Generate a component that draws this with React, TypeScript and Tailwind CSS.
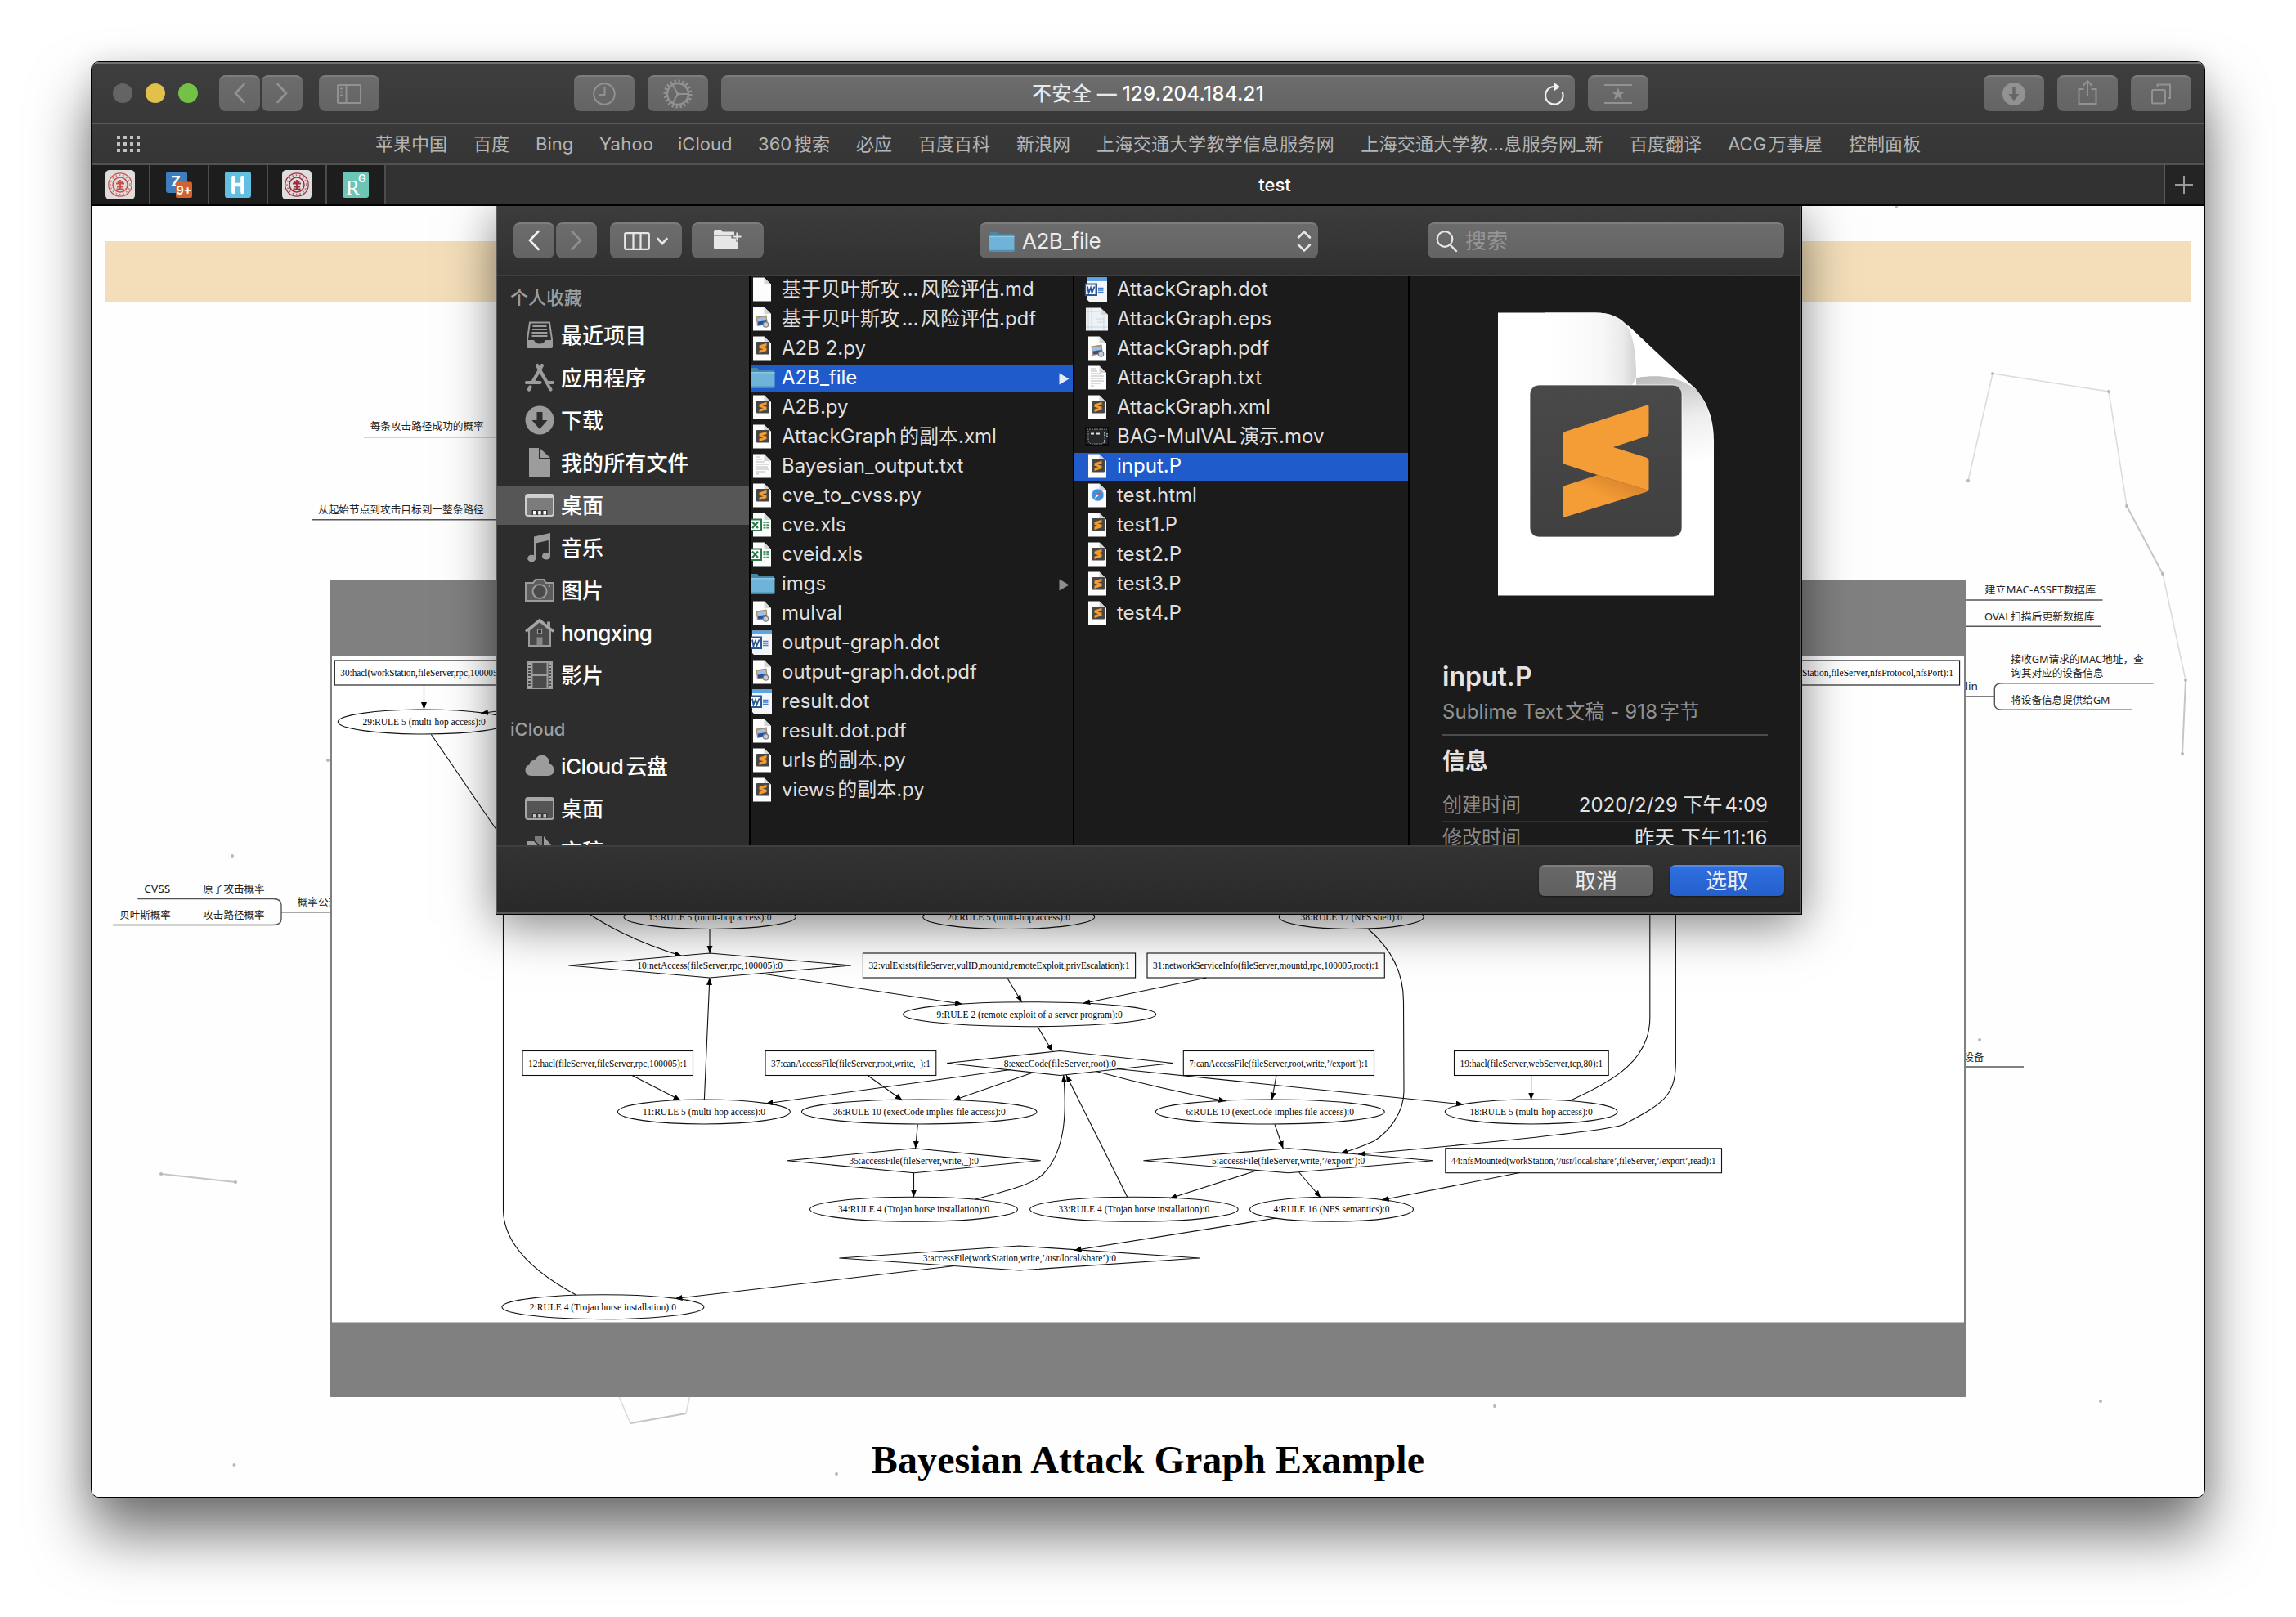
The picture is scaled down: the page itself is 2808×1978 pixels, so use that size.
import React from "react";

/* ---------- graph data ---------- */

type Node = { kind: "rect" | "ellipse" | "diamond"; x1: number; x2: number; cy: number; label: string };

const nodes: Node[] = [
  { kind: "rect", x1: 409.3, x2: 628, cy: 823, label: "30:hacl(workStation,fileServer,rpc,100005):1" },
  { kind: "ellipse", x1: 413.3, x2: 624, cy: 883, label: "29:RULE 5 (multi-hop access):0" },
  { kind: "ellipse", x1: 763, x2: 973.4, cy: 1121.5, label: "13:RULE 5 (multi-hop access):0" },
  { kind: "ellipse", x1: 1128.7, x2: 1338.7, cy: 1121.5, label: "20:RULE 5 (multi-hop access):0" },
  { kind: "ellipse", x1: 1564.2, x2: 1741.2, cy: 1121.5, label: "38:RULE 17 (NFS shell):0" },
  { kind: "diamond", x1: 695.4, x2: 1040.9, cy: 1181, label: "10:netAccess(fileServer,rpc,100005):0" },
  { kind: "rect", x1: 1055.4, x2: 1388.6, cy: 1181, label: "32:vulExists(fileServer,vulID,mountd,remoteExploit,privEscalation):1" },
  { kind: "rect", x1: 1403, x2: 1693.3, cy: 1181, label: "31:networkServiceInfo(fileServer,mountd,rpc,100005,root):1" },
  { kind: "ellipse", x1: 1104.6, x2: 1413.7, cy: 1240.7, label: "9:RULE 2 (remote exploit of a server program):0" },
  { kind: "rect", x1: 639, x2: 847.5, cy: 1300.5, label: "12:hacl(fileServer,fileServer,rpc,100005):1" },
  { kind: "rect", x1: 936, x2: 1144.8, cy: 1300.5, label: "37:canAccessFile(fileServer,root,write,_):1" },
  { kind: "diamond", x1: 1158.2, x2: 1434.6, cy: 1300.5, label: "8:execCode(fileServer,root):0" },
  { kind: "rect", x1: 1447.3, x2: 1680.5, cy: 1300.5, label: "7:canAccessFile(fileServer,root,write,’/export’):1" },
  { kind: "rect", x1: 1778.5, x2: 1967.2, cy: 1300.5, label: "19:hacl(fileServer,webServer,tcp,80):1" },
  { kind: "ellipse", x1: 755.4, x2: 966.4, cy: 1360, label: "11:RULE 5 (multi-hop access):0" },
  { kind: "ellipse", x1: 980.4, x2: 1268, cy: 1360, label: "36:RULE 10 (execCode implies file access):0" },
  { kind: "ellipse", x1: 1413.2, x2: 1693.3, cy: 1360, label: "6:RULE 10 (execCode implies file access):0" },
  { kind: "ellipse", x1: 1767.2, x2: 1978, cy: 1360, label: "18:RULE 5 (multi-hop access):0" },
  { kind: "diamond", x1: 962.7, x2: 1272.8, cy: 1419.7, label: "35:accessFile(fileServer,write,_):0" },
  { kind: "diamond", x1: 1398.4, x2: 1753, cy: 1419.7, label: "5:accessFile(fileServer,write,’/export’):0" },
  { kind: "rect", x1: 1767.8, x2: 2105.5, cy: 1419.7, label: "44:nfsMounted(workStation,’/usr/local/share’,fileServer,’/export’,read):1" },
  { kind: "ellipse", x1: 990.5, x2: 1244.5, cy: 1479.3, label: "34:RULE 4 (Trojan horse installation):0" },
  { kind: "ellipse", x1: 1259.5, x2: 1514.2, cy: 1479.3, label: "33:RULE 4 (Trojan horse installation):0" },
  { kind: "ellipse", x1: 1528.5, x2: 1728.5, cy: 1479.3, label: "4:RULE 16 (NFS semantics):0" },
  { kind: "diamond", x1: 1026.4, x2: 1467.2, cy: 1539, label: "3:accessFile(workStation,write,’/usr/local/share’):0" },
  { kind: "ellipse", x1: 613.9, x2: 860.9, cy: 1598.7, label: "2:RULE 4 (Trojan horse installation):0" },
];

const arrows: string[] = [
  "M518.5 838V868",
  "M640 866L588 872.5",
  "M719 1117C750 1138 790 1156 834 1169.5",
  "M868 1136.5V1166",
  "M930.5 1190.7L1177 1228.3",
  "M1231.6 1196L1249.8 1226",
  "M1475.4 1196L1324.3 1227.5",
  "M861.4 1345L867.9 1196",
  "M1269 1256L1287.3 1286.5",
  "M773 1315.5L832.5 1346",
  "M1235.9 1308.5L936.4 1350",
  "M1061.8 1316L1103.6 1346",
  "M1263.2 1312L1165.7 1346",
  "M1340.4 1310.5C1390 1324 1440 1336 1499.3 1347",
  "M1366 1307.5L1789.7 1351",
  "M1561 1315.5L1555.5 1345.5",
  "M1872.6 1315.5V1345.5",
  "M1122.3 1375.5L1119.6 1405",
  "M1117.5 1434.5V1464.5",
  "M1193 1467C1225 1458 1262 1450 1276 1436C1305 1406 1304 1355 1300.7 1315",
  "M1378.9 1464.5L1303.9 1315",
  "M1673.4 1136.5C1701 1160 1716.5 1190 1716.5 1225L1717 1335C1717 1362 1697 1386 1680 1396C1667 1402 1653 1407 1639.2 1411",
  "M1559 1375.5L1569.3 1405",
  "M2049.4 1117V1300C2049 1340 2035 1350 1984.6 1376C1960 1384 1800 1400 1661 1412",
  "M1538 1431.5L1430.5 1466",
  "M1588.7 1434L1615.2 1465",
  "M1858.6 1434.5L1689.7 1468",
  "M1561 1490L1313.6 1529.5",
  "M1165.2 1548.7L825.5 1588.5",
];

const plainEdges: string[] = [
  "M527.3 898.5C553 935 578 973 610 1019",
  "M704.5 1584C660 1560 616 1525 615.5 1480V1117",
  "M2017.8 1117V1245C2017.8 1296 1975 1322 1919.8 1346.5",
];

function AttackGraph() {
  return (
    <svg className="absolute left-[292px] top-[457px]" width="2000" height="1000" viewBox="404 709 2000 1000">
      <defs>
        <marker id="tip" markerWidth="10" markerHeight="8" refX="9" refY="3.5" orient="auto" markerUnits="userSpaceOnUse">
          <path d="M0 0L9 3.5L0 7z" fill="#000" />
        </marker>
      </defs>
      <rect x="404" y="709" width="2000" height="1000" fill="#808080" />
      <rect x="406" y="803" width="1996" height="814.5" fill="#fff" />
      <g fill="none" stroke="#111" strokeWidth="1.1">
        {arrows.map((d) => (
          <path key={d} d={d} markerEnd="url(#tip)" />
        ))}
        {plainEdges.map((d) => (
          <path key={d} d={d} />
        ))}
        <rect x="2050" y="808" width="346.6" height="30" />
        {nodes.map((n) => {
          const cx = (n.x1 + n.x2) / 2;
          if (n.kind === "rect") return <rect key={n.label} x={n.x1} y={n.cy - 15} width={n.x2 - n.x1} height="30" />;
          if (n.kind === "ellipse") return <ellipse key={n.label} cx={cx} cy={n.cy} rx={(n.x2 - n.x1) / 2} ry="15" />;
          return <path key={n.label} d={`M${n.x1} ${n.cy}L${cx} ${n.cy - 15}L${n.x2} ${n.cy}L${cx} ${n.cy + 15}z`} />;
        })}
      </g>
      <g className="font-['Liberation_Serif',serif] text-[11.5px]" fill="#000">
        {nodes.map((n) =>
          n.kind === "rect" ? (
            <text key={n.label} x={n.x1 + 7} y={n.cy + 4} textLength={n.x2 - n.x1 - 14} lengthAdjust="spacingAndGlyphs">
              {n.label}
            </text>
          ) : (
            <text key={n.label} x={(n.x1 + n.x2) / 2} y={n.cy + 4} textAnchor="middle">
              {n.label}
            </text>
          ),
        )}
        <text x="2389" y="827" textAnchor="end">
          42:hacl(workStation,fileServer,nfsProtocol,nfsPort):1
        </text>
      </g>
    </svg>
  );
}

/* ---------- mind map behind the graph ---------- */

const mindTexts: [number, number, number, string][] = [
  [452.7, 522, 139, "每条攻击路径成功的概率"],
  [389, 624, 202.7, "从起始节点到攻击目标到一整条路径"],
  [176.3, 1087.5, 32, "CVSS"],
  [248.3, 1087.5, 75.4, "原子攻击概率"],
  [146.3, 1120, 62.4, "贝叶斯概率"],
  [248.3, 1120, 75.4, "攻击路径概率"],
  [363.7, 1104, 50.5, "概率公式"],
  [2427.2, 722, 136, "建立MAC-ASSET数据库"],
  [2427, 754.3, 134.5, "OVAL扫描后更新数据库"],
  [2459.3, 807, 162.5, "接收GM请求的MAC地址，查"],
  [2459.3, 824, 113.3, "询其对应的设备信息"],
  [2459.3, 856.5, 121.2, "将设备信息提供给GM"],
  [2398, 840, 21, "rlin"],
  [2401.5, 1293.5, 25, "设备"],
];

const dots: [number, number][] = [
  [401, 930], [284, 1047], [286.5, 1792], [1023, 1803], [1828, 1720], [2569, 1714], [2421, 1272], [2319, 253],
  [2407, 588], [2437, 457], [2579, 479], [2601, 619], [2645, 702], [2673, 832], [2669, 922], [197, 1436], [288, 1446],
];

function MindMap() {
  return (
    <svg className="absolute left-0 top-0 [text-autospace:no-autospace]" width="2584" height="1578" viewBox="112 252 2584 1578">
      <g fill="none" stroke="#dcdcdc" strokeWidth="1.6">
        <path d="M2407 588L2437 457L2579 479L2601 619M2645 702L2673 832M756 1706L771 1741M839 1729L844 1706" />
        <path d="M2601 619L2645 702M2673 832L2669 922" stroke="#c6c6c6" strokeWidth="2" />
        <path d="M197 1436L288 1446M771 1741L839 1729" stroke="#c4c4c4" strokeWidth="1.8" />
      </g>
      {dots.map(([x, y]) => (
        <circle key={`${x}-${y}`} cx={x} cy={y} r="2" fill="#b8b8b8" />
      ))}
      <g fill="none" stroke="#555" strokeWidth="1.4">
        <path d="M445 534.6H620M381.7 635.7H620" />
        <path d="M168.3 1099.5H334Q344 1099.5 344 1107V1124Q344 1131.5 334 1131.5H138M344 1115.7H410" />
        <path d="M2400 734H2571.5M2400 766.3H2569.5M2400 852H2439.3M2633.5 835.7H2450Q2439.3 835.7 2439.3 842V862Q2439.3 868.3 2450 868.3H2607.7M2400 1305H2475" />
      </g>
      <g className="font-['Noto_Sans','Noto_Sans_CJK_SC',sans-serif] text-[12.5px]" fill="#222">
        {mindTexts.map(([x, y, w, t]) => (
          <text key={t} x={x} y={y + 4.3} textLength={w} lengthAdjust="spacingAndGlyphs">
            {t}
          </text>
        ))}
      </g>
    </svg>
  );
}

/* ---------- file icons ---------- */

const PAGE = "M5 1.5H18.5L27 10V30.5H5z";
const FOLD = "M18.5 1.5V10H27z";

function FolderIcon({ size = 32 }: { size?: number }) {
  return (
    <svg width={size} height={size} viewBox="0 0 32 32" className="shrink-0">
      <path d="M1 5.5Q1 4 2.5 4H10L12.5 6.5H30Q31 6.5 31 8V12H1z" fill="#4b87a8" />
      <path d="M0 9H31.5V27Q31.5 28.5 30 28.5H1.5Q0 28.5 0 27z" fill="#6fb3d9" />
      <path d="M0 9H31.5V10.5H0z" fill="#8cc8e6" />
      <path d="M0 26.5H31.5V27Q31.5 28.5 30 28.5H1.5Q0 28.5 0 27z" fill="#4f8fb4" />
    </svg>
  );
}

type FileKind = "plain" | "pdf" | "subl" | "folder" | "txt" | "xls" | "word" | "eps" | "mov" | "html";

function FileIcon({ kind }: { kind: FileKind }) {
  if (kind === "folder") return <FolderIcon />;
  if (kind === "mov")
    return (
      <svg width="32" height="32" viewBox="0 0 32 32" className="shrink-0">
        <rect x="1" y="4" width="29" height="24" fill="#0b0b0b" />
        <rect x="2.5" y="7" width="26" height="18" fill="#25282a" />
        <path d="M3 7H28M5 9V22L8 25H22L25 22V10" stroke="#8b9092" strokeWidth="1" strokeDasharray="2 1" fill="none" />
        <path d="M8 12.5H12M14 12.500H19" stroke="#e3e6e7" strokeWidth="1.800" />
        <path d="M25 11V17M28 12V16M25 20V24" stroke="#b7c4d6" strokeWidth="1.600" strokeDasharray="1.500 1" />
      </svg>
    );
  if (kind === "word")
    return (
      <svg width="32" height="32" viewBox="0 0 32 32" className="shrink-0">
        <path d="M4 1.500H28V31H6L4 29z" fill="#f3f5f7" />
        <path d="M4 1.500H28V6H4z" fill="#5ba4e6" />
        <path d="M17 14.500H23.500M17 17H23.500M17 19.500H23.500" stroke="#3f7fd0" strokeWidth="1.300" />
        <rect x="0.800" y="8.500" width="15.200" height="15.500" fill="#2b5797" />
        <rect x="2.200" y="10.500" width="11.300" height="11.500" fill="#fff" />
        <path d="M4 12.500L5.500 20L8 14L9.500 20L12.500 12.500" stroke="#2b5797" strokeWidth="1.900" fill="none" />
      </svg>
    );
  return (
    <svg width="32" height="32" viewBox="0 0 32 32" className="shrink-0">
      <path d={kind === "eps" ? "M2 2.500H20L29 11V30.500H2z" : PAGE} fill={kind === "eps" ? "#eef2f6" : "#fdfdfd"} />
      <path d={kind === "eps" ? "M20 2.500V11H29z" : FOLD} fill="#d5d5d5" />
      {kind === "eps" && <path d="M5 3V30M9 3V30M2 26H29M2 7H19M14 16H24M16 20H24M24 12V30" stroke="#c2d2e2" strokeWidth="0.900" fill="none" />}
      {kind === "txt" && (
        <path d="M8 5H14M8 8H16M8 11H20M8 14H24M8 17H23M8 20H24M8 23H20M8 26H12" stroke="#b9b9b9" strokeWidth="1" fill="none" />
      )}
      {kind === "pdf" && (
        <g>
          <path d="M8.500 13.500L21.500 11.500L23 23L10 25z" fill="#a98d63" />
          <path d="M10 15L20.500 13.500L21.800 22L11.200 23.500z" fill="#9cc0ea" />
          <path d="M10.800 19.500L21.200 18L21.800 22L11.200 23.500z" fill="#2d4f93" />
          <circle cx="20.500" cy="23" r="3.200" fill="#c9ced4" stroke="#7b8086" strokeWidth="1.200" />
        </g>
      )}
      {kind === "subl" && (
        <g>
          <rect x="9" y="8" width="16" height="15.500" rx="1" fill="#474747" />
          <path d="M21.500 9.800V13.200L16.500 14.500L21.500 15.800V19L12.500 22V18.600L17.500 17.200L12.500 15.800V12.600z" fill="#f59b2f" />
        </g>
      )}
      {kind === "html" && (
        <g>
          <circle cx="16.500" cy="15.500" r="7.300" fill="#3c8fe0" stroke="#a9c4dd" strokeWidth="1" />
          <path d="M20.500 11L17.500 16.500L15.500 14.500z" fill="#e84c3d" />
          <path d="M12.500 20L17.500 16.500L15.500 14.500z" fill="#fff" />
        </g>
      )}
      {kind === "xls" && (
        <g>
          <rect x="2" y="8.500" width="14" height="15.500" fill="#2d7a48" />
          <rect x="2" y="10.500" width="11.500" height="11.500" fill="#fff" />
          <path d="M4 12.500L11 20M11 12.500L4 20" stroke="#2d7a48" strokeWidth="2.300" />
          <path d="M17.500 13H24M17.500 16.300H24M17.500 19.600H24" stroke="#3b9a5d" strokeWidth="1.900" strokeDasharray="3 0.800" />
        </g>
      )}
    </svg>
  );
}

const colOne: [FileKind, string][] = [
  ["plain", "基于贝叶斯攻…风险评估.md"],
  ["pdf", "基于贝叶斯攻…风险评估.pdf"],
  ["subl", "A2B 2.py"],
  ["folder", "A2B_file"],
  ["subl", "A2B.py"],
  ["subl", "AttackGraph的副本.xml"],
  ["txt", "Bayesian_output.txt"],
  ["subl", "cve_to_cvss.py"],
  ["xls", "cve.xls"],
  ["xls", "cveid.xls"],
  ["folder", "imgs"],
  ["pdf", "mulval"],
  ["word", "output-graph.dot"],
  ["pdf", "output-graph.dot.pdf"],
  ["word", "result.dot"],
  ["pdf", "result.dot.pdf"],
  ["subl", "urls的副本.py"],
  ["subl", "views的副本.py"],
];

const colTwo: [FileKind, string][] = [
  ["word", "AttackGraph.dot"],
  ["eps", "AttackGraph.eps"],
  ["pdf", "AttackGraph.pdf"],
  ["txt", "AttackGraph.txt"],
  ["subl", "AttackGraph.xml"],
  ["mov", "BAG-MulVAL演示.mov"],
  ["subl", "input.P"],
  ["html", "test.html"],
  ["subl", "test1.P"],
  ["subl", "test2.P"],
  ["subl", "test3.P"],
  ["subl", "test4.P"],
];

function FileRow({ kind, name, selected, indent }: { kind: FileKind; name: string; selected: boolean; indent: boolean }) {
  const [head, tail] = name.split("…");
  return (
    <div
      className={`mb-[2px] flex h-[34px] items-center text-[24px] leading-[34px] whitespace-nowrap ${
        selected ? "bg-[#1f5bcb] text-white" : "text-[#dfdfdf]"
      } ${indent ? "pl-[12px]" : "-ml-[2px] pl-0"}`}
    >
      <span className="-mt-[3px]">
        <FileIcon kind={kind} />
      </span>
      <span className="-mt-[3px] ml-2">
        {head}
        {tail && <span className="inline-block w-[26px] text-center">…</span>}
        {tail}
      </span>
      {kind === "folder" && (
        <svg className="mr-[4px] ml-auto" width="13" height="15" viewBox="0 0 13 15">
          <path d="M0.500 0.500L12.500 7.500L0.500 14.500z" fill={selected ? "#e4ecfa" : "#8f8f8f"} />
        </svg>
      )}
    </div>
  );
}

/* ---------- sidebar ---------- */

const sideIcons: Record<string, React.ReactNode> = {
  recent: (
    <g>
      <path d="M6 2.500H30L33 23V32Q33 33 32 33H4Q3 33 3 32V23z" fill="none" stroke="#9c9c9c" strokeWidth="2" />
      <path d="M9.500 7H26.500M9 11H27M8.500 15H27.500M8.500 19H27.500" stroke="#9c9c9c" strokeWidth="1.800" />
      <path d="M3 24H11Q13 28.500 18 28.500T25 24H33V32.500H3z" fill="#9c9c9c" />
    </g>
  ),
  apps: (
    <g stroke="#9c9c9c" fill="none" strokeLinecap="round">
      <path d="M15 3L28 26M29 28.500L31.500 32.500" strokeWidth="4.200" />
      <path d="M21 3L9 24M6.500 29.500L5 32.500" strokeWidth="4.200" />
      <path d="M2 24H18.500M27 24H34" strokeWidth="4.200" />
    </g>
  ),
  download: (
    <g>
      <circle cx="18" cy="18" r="17.500" fill="#9c9c9c" />
      <path d="M14.500 8H21.500V18H27.500L18 29L8.500 18H14.500z" fill="#2d2d2d" />
    </g>
  ),
  doc: (
    <g fill="#9c9c9c">
      <path d="M5 0H17V13.500H31V36H5z" />
      <path d="M19 1L31 12H19z" />
    </g>
  ),
  music: (
    <g fill="#9c9c9c">
      <path d="M11 4.500L31 0V28H28.800V9L13.200 12.500V31H11z" />
      <ellipse cx="8.200" cy="31" rx="5" ry="4.300" />
      <ellipse cx="26" cy="28.200" rx="5" ry="4.300" />
    </g>
  ),
  camera: (
    <g>
      <path d="M1 9H10L13 5H23L26 9H35V31H1z" fill="#5c5c5c" stroke="#9c9c9c" strokeWidth="2" />
      <circle cx="18" cy="19.500" r="8.500" fill="#4a4a4a" stroke="#9c9c9c" strokeWidth="2" />
      <circle cx="30" cy="13" r="1.200" fill="#9c9c9c" />
    </g>
  ),
  home: (
    <g>
      <path d="M5 15V34H31V15L18 4z" fill="#4a4a4a" stroke="#9c9c9c" strokeWidth="2" />
      <path d="M1 16.500L18 2.500L35 16.500" fill="none" stroke="#a6a6a6" strokeWidth="3" />
      <path d="M27 4.500H31V12L27 8.500z" fill="#9c9c9c" />
      <rect x="15.500" y="14" width="5" height="5" fill="#2d2d2d" stroke="#9c9c9c" strokeWidth="1.200" />
      <rect x="14.500" y="23.500" width="7" height="10" fill="#888" />
    </g>
  ),
  film: (
    <g>
      <rect x="3" y="2" width="30" height="32" fill="#4a4a4a" stroke="#9c9c9c" strokeWidth="2" />
      <path d="M8.500 2V34M27.500 2V34M8.500 18H27.500" stroke="#9c9c9c" strokeWidth="2" />
      <path d="M5.500 3V34M30.500 3V34" stroke="#a8a8a8" strokeWidth="3" strokeDasharray="2 2" />
    </g>
  ),
  cloud: <path d="M8 30Q0.500 30 0.500 23Q0.500 17.500 5.500 16.500Q6 10.500 12.500 11Q15 4 22 4.500Q29.500 6 29.500 15Q35.500 17 35.500 23Q35 30 28 30z" fill="#9c9c9c" />,
  docs: (
    <g fill="#9c9c9c">
      <path d="M2 6H11L16 12V36H2z" />
      <path d="M12 0H21V16L16 9L12 5z" opacity="0.700" />
      <path d="M23 0L33 12V36H18V14H23z" />
    </g>
  ),
};

function DesktopGlyph({ bright }: { bright: boolean }) {
  const c = bright ? "#cfcfcf" : "#a6a6a6";
  return (
    <g>
      <rect x="1" y="5" width="34" height="26" rx="3" fill={bright ? "#7c7c7c" : "#555"} stroke={c} strokeWidth="2" />
      <path d="M1 5.500Q1 4.500 3 4.500H33Q35 4.500 35 6V9H1z" fill={c} />
      <rect x="8.500" y="24" width="19" height="6" fill="#3a3a3a" />
      <path d="M10 25H13.500V29.500H10zM16.200 25H19.700V29.500H16.200zM22.500 25H26V29.500H22.500z" fill={bright ? "#fff" : "#c4c4c4"} />
    </g>
  );
}

function SideRow({ icon, label, selected = false, tight = false }: { icon: string; label: string; selected?: boolean; tight?: boolean }) {
  return (
    <div className={`my-[2px] flex h-[48px] shrink-0 items-center gap-2 pl-[34px] ${selected ? "bg-[#565656]" : ""}`}>
      <svg width="36" height="36" viewBox="0 0 36 36" className="shrink-0">
        {icon === "desktop" ? <DesktopGlyph bright={selected} /> : sideIcons[icon]}
      </svg>
      <span className={`mt-[2px] text-[26px] leading-[46px] font-medium whitespace-nowrap text-white ${tight ? "tracking-[-0.022em]" : "tracking-[0.004em]"}`}>
        {label}
      </span>
    </div>
  );
}

function Sidebar() {
  return (
    <div className="flex w-[308px] shrink-0 flex-col overflow-hidden bg-[#2d2d2d]">
      <div className="flex h-[46px] shrink-0 items-center pt-[7px] pl-4 text-[22px] font-medium text-[#9d9d9d]">个人收藏</div>
      <SideRow icon="recent" label="最近项目" />
      <SideRow icon="apps" label="应用程序" />
      <SideRow icon="download" label="下载" />
      <SideRow icon="doc" label="我的所有文件" />
      <SideRow icon="desktop" label="桌面" selected />
      <SideRow icon="music" label="音乐" />
      <SideRow icon="camera" label="图片" />
      <SideRow icon="home" label="hongxing" tight />
      <SideRow icon="film" label="影片" />
      <div className="flex h-[59px] shrink-0 items-center pt-[22px] pl-4 text-[22px] font-medium text-[#9d9d9d]">iCloud</div>
      <SideRow icon="cloud" label="iCloud云盘" tight />
      <SideRow icon="desktop" label="桌面" />
      <SideRow icon="docs" label="文稿" />
    </div>
  );
}

/* ---------- preview ---------- */

function DocumentPreview() {
  return (
    <svg width="290" height="366" viewBox="1820 372 290 366">
      <defs>
        <linearGradient id="curlShade" x1="0" y1="0" x2="1" y2="0">
          <stop offset="0" stopColor="#fff" />
          <stop offset="0.600" stopColor="#f8f8f8" />
          <stop offset="0.850" stopColor="#ebebeb" />
          <stop offset="1" stopColor="#d2d2d2" />
        </linearGradient>
        <linearGradient id="flap" x1="0" y1="1" x2="0.700" y2="0.400">
          <stop offset="0" stopColor="#fff" />
          <stop offset="0.700" stopColor="#fff" />
          <stop offset="1" stopColor="#e6e6e6" />
        </linearGradient>
        <linearGradient id="underFlap" x1="0.300" y1="0" x2="0.450" y2="1">
          <stop offset="0" stopColor="#bcbcbc" />
          <stop offset="0.500" stopColor="#ededed" />
          <stop offset="1" stopColor="#fff" />
        </linearGradient>
        <linearGradient id="tile" x1="0" y1="0" x2="0" y2="1">
          <stop offset="0" stopColor="#494949" />
          <stop offset="1" stopColor="#404040" />
        </linearGradient>
        <linearGradient id="bandShade" gradientUnits="userSpaceOnUse" x1="1985" y1="590" x2="1974" y2="614">
          <stop offset="0" stopColor="#dd882c" />
          <stop offset="1" stopColor="#f49c35" />
        </linearGradient>
      </defs>
      <path d="M1832 382.500H1951C1970 382.500 1981 388 1990 398L2074 476C2088 492 2096 512 2096 540V728.500H1832z" fill="#fff" />
      <path d="M1890 382.500H1951C1970 382.500 1981 388 1992 402C2001 418 2001 440 2001 462L1996 471H1890z" fill="url(#curlShade)" />
      <path d="M2001 462C2035 456 2055 460 2072 474C2088 490 2096 512 2096 570H2050L2001 470z" fill="url(#underFlap)" />
      <path d="M1990 397C2000 418 2001 440 2001 462C2030 458 2052 460 2075 477z" fill="url(#flap)" />
      <rect x="1871" y="471" width="186" height="186" rx="11" fill="url(#tile)" stroke="#fff" strokeOpacity="0.700" strokeWidth="1" />
      <path d="M1954 581L2016.500 600L2013 602L1914 632.500Q1911.500 633 1911.500 630V598Q1911.500 595 1914 594z" fill="url(#bandShade)" />
      <path
        d="M2013 496Q2016.500 494.500 2016.500 498V530Q2016.500 532.500 2014 533.500L1973 547L2013 559.500Q2016.500 560.500 2016.500 564V600L1954 581L1914 568Q1911.500 567 1911.500 564V532Q1911.500 529 1914 528z"
        fill="#f49c35"
      />
    </svg>
  );
}

function Preview() {
  return (
    <div className="flex flex-1 flex-col overflow-hidden bg-[#1b1b1b] pr-[40px] pl-[40px]">
      <div className="mt-[34px] flex h-[366px] shrink-0 justify-start pl-[56px]">
        <DocumentPreview />
      </div>
      <div className="mt-[68px] h-[44px] shrink-0 text-[32px] leading-[44px] font-semibold text-[#e3e3e3]">input.P</div>
      <div className="mt-[4px] h-[34px] shrink-0 text-[24px] leading-[34px] tracking-[0.004em] whitespace-nowrap text-[#929292]">Sublime Text文稿 - 918字节</div>
      <div className="mt-[10px] h-[2px] shrink-0 bg-[#4c4c4c]" />
      <div className="mt-[11px] h-[40px] shrink-0 text-[28px] leading-[40px] font-bold text-[#e3e3e3]">信息</div>
      <div className="mt-[17px] flex h-[34px] shrink-0 items-center justify-between text-[24px] whitespace-nowrap">
        <span className="text-[#8a8a8a]">创建时间</span>
        <span className="text-[#e3e3e3]">2020/2/29 下午4:09</span>
      </div>
      <div className="mt-[2px] h-[2px] shrink-0 bg-[#303030]" />
      <div className="mt-[2px] flex h-[34px] shrink-0 items-center justify-between text-[24px] whitespace-nowrap">
        <span className="text-[#8a8a8a]">修改时间</span>
        <span className="tracking-[0.025em] text-[#e3e3e3]">昨天 下午11:16</span>
      </div>
    </div>
  );
}

/* ---------- file dialog ---------- */

const control = "flex h-[44px] shrink-0 items-center justify-center rounded-[8px] border-t-2 border-[#7d7d7d] bg-gradient-to-b from-[#6c6c6c] to-[#646464]";

function Chevron({ dir, color }: { dir: "left" | "right"; color: string }) {
  return (
    <svg width="16" height="26" viewBox="0 0 16 26" className="-mt-[2px]">
      <path d={dir === "left" ? "M13.500 2L3 13L13.500 24" : "M2.500 2L13 13L2.500 24"} fill="none" stroke={color} strokeWidth="2.600" strokeLinecap="round" />
    </svg>
  );
}

function FileDialog() {
  return (
    <div className="absolute top-0 left-[494px] flex h-[867px] w-[1598px] flex-col border-x border-b border-black bg-[#2d2d2d] shadow-[0_12px_56px_rgba(0,0,0,0.5)]">
      <div className="flex flex-1 flex-col overflow-hidden border-x border-b-2 border-[#5a5a5a]">
        <div className="flex h-[84px] shrink-0 items-center bg-gradient-to-b from-[#3c3c3c] to-[#303030] pr-[20px] pl-[20px]">
          <div className={`${control} w-[50px]`}><Chevron dir="left" color="#f0f0f0" /></div>
          <div className={`${control} ml-[2px] w-[50px]`}><Chevron dir="right" color="#8e8e8e" /></div>
          <div className={`${control} ml-[16px] w-[88px] gap-2`}>
            <svg width="32" height="22" viewBox="0 0 32 22">
              <rect x="1.200" y="1.200" width="29.600" height="19.600" rx="1.500" fill="none" stroke="#e6e6e6" strokeWidth="2.200" />
              <path d="M11.500 1V21M20.500 1V21" stroke="#e6e6e6" strokeWidth="2.200" />
            </svg>
            <svg width="14" height="10" viewBox="0 0 14 10">
              <path d="M1.500 2L7 8L12.500 2" fill="none" stroke="#e6e6e6" strokeWidth="2.600" strokeLinecap="round" />
            </svg>
          </div>
          <div className={`${control} ml-[12px] w-[88px]`}>
            <svg width="36" height="28" viewBox="0 0 36 28" className="-mt-[4px]">
              <path d="M1 4Q1 2 3 2H10L12 4.500H26V8H1z" fill="#e6e6e6" />
              <path d="M1 9.500H22.500V12.500H28V16.500H31V24Q31 26 29 26H3Q1 26 1 24z" fill="#e6e6e6" />
              <path d="M29.500 5.500V15.500M24.500 10.500H34.500" stroke="#e6e6e6" strokeWidth="2.200" />
            </svg>
          </div>
          <div className={`${control} ml-auto w-[414px] justify-start pr-[8px] pl-[12px]`}>
            <FolderIcon size={31} />
            <span className="ml-[9px] text-[26px] leading-none tracking-[-0.018em] text-[#ececec]">A2B_file</span>
            <svg width="18" height="28" viewBox="0 0 18 28" className="ml-auto">
              <path d="M2 9.500L9 2.500L16 9.500M2 18.500L9 25.500L16 18.500" fill="none" stroke="#e6e6e6" strokeWidth="2.600" strokeLinecap="round" />
            </svg>
          </div>
          <div className={`${control} ml-[134px] w-[436px] justify-start pl-[10px]`}>
            <svg width="27" height="28" viewBox="0 0 27 28">
              <circle cx="11" cy="11.500" r="9.300" fill="none" stroke="#e6e6e6" strokeWidth="2.200" />
              <path d="M17.500 18.500L25 26" stroke="#e6e6e6" strokeWidth="2.400" strokeLinecap="round" />
            </svg>
            <span className="ml-[9px] text-[26px] leading-none text-[#959595]">搜索</span>
          </div>
        </div>
        <div className="h-[2px] shrink-0 bg-[#3f3f3f]" />
        <div className="flex h-[696px] shrink-0 overflow-hidden">
          <Sidebar />
          <div className="w-[2px] shrink-0 bg-black" />
          <div className="w-[394px] shrink-0 overflow-hidden bg-[#1b1b1b]">
            {colOne.map(([kind, name]) => (
              <FileRow key={name} kind={kind} name={name} selected={name === "A2B_file"} indent={false} />
            ))}
          </div>
          <div className="w-[2px] shrink-0 bg-black" />
          <div className="w-[408px] shrink-0 overflow-hidden bg-[#1b1b1b]">
            {colTwo.map(([kind, name]) => (
              <FileRow key={name} kind={kind} name={name} selected={name === "input.P"} indent />
            ))}
          </div>
          <div className="w-[2px] shrink-0 bg-black" />
          <Preview />
        </div>
        <div className="flex flex-1 items-center justify-end gap-[20px] border-t-2 border-[#3f3f3f] bg-gradient-to-b from-[#333333] to-[#292929] pt-[2px] pr-[20px]">
          <button className="h-[38px] w-[140px] rounded-[7px] border-t-2 border-[#7d7d7d] bg-gradient-to-b from-[#686868] to-[#606060] text-[26px] leading-[34px] text-[#ececec] shadow-[0_1px_2px_rgba(0,0,0,0.5)]">取消</button>
          <button className="h-[38px] w-[140px] rounded-[7px] border-t-2 border-[#5488e6] bg-gradient-to-b from-[#2f6fe0] to-[#2460cc] text-[26px] leading-[34px] text-[#ececec] shadow-[0_1px_2px_rgba(0,0,0,0.5)]">选取</button>
        </div>
      </div>
    </div>
  );
}

/* ---------- browser chrome ---------- */

const dim = "#929292";

function Toolbar() {
  return (
    <div className="flex h-[74px] shrink-0 items-center border-t-2 border-[#717171] bg-gradient-to-b from-[#3e3e3e] to-[#383838] pr-[16px] pl-[26px]">
      <div className="flex gap-[16px]">
        <span className="h-[24px] w-[24px] rounded-full bg-[#646464]" />
        <span className="h-[24px] w-[24px] rounded-full bg-[#e2c04c]" />
        <span className="h-[24px] w-[24px] rounded-full bg-[#73c146]" />
      </div>
      <div className={`${control} ml-[26px] w-[50px]`}><Chevron dir="left" color={dim} /></div>
      <div className={`${control} ml-[2px] w-[50px]`}><Chevron dir="right" color={dim} /></div>
      <div className={`${control} ml-[20px] w-[74px]`}>
        <svg width="30" height="24" viewBox="0 0 30 24" fill="none" stroke={dim} strokeWidth="2">
          <rect x="1" y="1" width="28" height="22" rx="1" />
          <path d="M11.500 1V23M4 5.500H8M4 9.500H8M4 13.500H8" />
        </svg>
      </div>
      <div className={`${control} ml-[238px] w-[74px]`}>
        <svg width="28" height="28" viewBox="0 0 28 28" fill="none" stroke={dim} strokeWidth="2">
          <circle cx="14" cy="14" r="12.800" />
          <path d="M14.500 6V15H8" />
        </svg>
      </div>
      <div className={`${control} ml-[16px] w-[74px]`}>
        <svg width="38" height="38" viewBox="0 0 38 38" fill="none" stroke={dim}>
          <circle cx="19" cy="19" r="15.800" strokeWidth="3.600" strokeDasharray="2.300 2.664" />
          <circle cx="19" cy="19" r="13" strokeWidth="2.400" />
          <path d="M19 19H32M19 19L12.500 7.700M19 19L12.500 30.300" strokeWidth="2" />
          <circle cx="19" cy="19" r="2.200" fill={dim} stroke="none" />
        </svg>
      </div>
      <div className={`${control} relative ml-[16px] w-[1044px]`}>
        <span className="text-[24px] leading-none font-medium tracking-[0.013em] whitespace-nowrap text-white">
          <span className="text-[#e8e8e8]">不安全 — </span>129.204.184.21
        </span>
        <svg className="absolute right-[11px]" width="28" height="28" viewBox="0 0 28 28">
          <path d="M23.700 11.500A10.800 10.800 0 1 1 14 5" fill="none" stroke="#f0f0f0" strokeWidth="2.200" />
          <path d="M13.500 0L21 5.200L13.500 10.500z" fill="#f0f0f0" />
        </svg>
      </div>
      <div className={`${control} ml-[16px] w-[74px]`}>
        <svg width="34" height="26" viewBox="0 0 34 26">
          <path d="M0 2H34M0 24H34" stroke={dim} strokeWidth="2" />
          <path d="M17 5L18.900 10.600H25L20.200 14.100L22 20L17 16.500L12 20L13.800 14.100L9 10.600H15.100z" fill={dim} />
        </svg>
      </div>
      <div className={`${control} ml-auto w-[74px]`}>
        <svg width="28" height="28" viewBox="0 0 28 28">
          <circle cx="14" cy="14" r="14" fill={dim} />
          <path d="M12.300 6H15.700V14H20.500L14 22.500L7.500 14H12.300z" fill="#666" />
        </svg>
      </div>
      <div className={`${control} ml-[16px] w-[74px]`}>
        <svg width="24" height="32" viewBox="0 0 24 32" fill="none" stroke={dim} strokeWidth="2" className="-mt-[4px]">
          <path d="M7.500 12H1.500V30H22.500V12H16.500M12 21V2.500M6.500 8L12 2L17.500 8" />
        </svg>
      </div>
      <div className={`${control} ml-[16px] w-[74px]`}>
        <svg width="24" height="26" viewBox="0 0 24 26" fill="none" stroke={dim} strokeWidth="2">
          <rect x="1" y="8" width="16" height="16.500" rx="1.500" />
          <path d="M7.500 4.500V1.500H23V18H20.500" />
        </svg>
      </div>
    </div>
  );
}

function Favorites() {
  const item = "shrink-0 text-center";
  return (
    <div className="flex h-[50px] shrink-0 items-center border-t-2 border-[#5a5a5a] bg-gradient-to-b from-[#393939] to-[#353535] pl-[31px]">
      <div className="grid grid-cols-4 gap-x-[4px] gap-y-[4px]">
        {Array.from({ length: 12 }, (_, i) => (
          <span key={i} className="h-[4px] w-[4px] bg-[#c0c0c0]" />
        ))}
      </div>
      <div className="ml-[288px] flex gap-[32px] text-[22px] leading-[48px] whitespace-nowrap text-[#b4b4b4]">
        <span className={`${item} w-[88px]`}>苹果中国</span>
        <span className={`${item} w-[44px]`}>百度</span>
        <span className={`${item} w-[46px]`}>Bing</span>
        <span className={`${item} w-[64px] tracking-[0.01em]`}>Yahoo</span>
        <span className={`${item} w-[66px]`}>iCloud</span>
        <span className={`${item} w-[88px]`}>360搜索</span>
        <span className={`${item} w-[44px]`}>必应</span>
        <span className={`${item} w-[88px]`}>百度百科</span>
        <span className={`${item} w-[66px]`}>新浪网</span>
        <span className={`${item} w-[291px] tracking-[0.018em]`}>上海交通大学教学信息服务网</span>
        <span className={`${item} w-[297px] tracking-[0.012em]`}>上海交通大学教…息服务网_新</span>
        <span className={`${item} w-[88px]`}>百度翻译</span>
        <span className={`${item} w-[116px]`}>ACG万事屋</span>
        <span className={`${item} w-[88px]`}>控制面板</span>
      </div>
    </div>
  );
}

function Seal({ color }: { color: string }) {
  return (
    <svg width="36" height="36" viewBox="0 0 36 36">
      <rect width="36" height="36" rx="5" fill="#e0dcdc" />
      <circle cx="18" cy="18" r="14.200" fill="none" stroke={color} strokeWidth="1.200" />
      <circle cx="18" cy="18" r="11.800" fill="none" stroke={color} strokeWidth="1.800" strokeDasharray="1.500 3" opacity="0.700" />
      <circle cx="18" cy="18" r="9" fill="none" stroke={color} strokeWidth="1.500" />
      <path d="M13 16.500H23M14 20.500H22M18 12V24M15 13.500L16.500 16M21 13.500L19.500 16M13.500 23.500H22.500" stroke={color} strokeWidth="1.800" />
    </svg>
  );
}

function TabBar() {
  const pin = "flex w-[72px] shrink-0 items-center justify-center border-r-2 border-[#4c4c4c] bg-[#1d1d1d]";
  return (
    <div className="flex h-[52px] shrink-0 border-t-2 border-b-2 border-t-[#525252] border-b-black bg-[#323232]">
      <div className={pin}><Seal color="#c8504a" /></div>
      <div className={pin}>
        <svg width="32" height="32" viewBox="0 0 32 32" className="font-['Inter',sans-serif] font-bold">
          <rect width="26" height="26" rx="3" fill="#3f7dbd" />
          <text x="6" y="17.500" fontSize="18" fill="#fff">Z</text>
          <rect x="12" y="12.500" width="20" height="19.500" rx="2" fill="#d4622f" />
          <text x="12.500" y="28" fontSize="15" textLength="19" lengthAdjust="spacingAndGlyphs" fill="#fff">9+</text>
        </svg>
      </div>
      <div className={pin}>
        <svg width="32" height="32" viewBox="0 0 32 32">
          <rect width="32" height="32" rx="3" fill="#62bfe2" />
          <path d="M10.500 7V25M21.500 7V25M10.500 16H21.500" stroke="#fff" strokeWidth="4.600" strokeLinecap="round" />
        </svg>
      </div>
      <div className={pin}><Seal color="#9c2f3e" /></div>
      <div className={pin}>
        <svg width="32" height="32" viewBox="0 0 32 32">
          <rect width="32" height="32" rx="3" fill="#6cc5b5" />
          <text x="4" y="27.500" fontSize="25" fill="#fff" className="font-['Liberation_Serif',serif]">R</text>
          <text x="19" y="13" fontSize="13" fill="#fff" className="font-['Inter',sans-serif] font-semibold">G</text>
        </svg>
      </div>
      <div className="flex flex-1 items-center justify-center text-[22px] font-medium text-white">test</div>
      <div className="flex w-[50px] shrink-0 items-center justify-center border-l-2 border-[#5a5a5a] bg-[#242424]">
        <svg width="22" height="22" viewBox="0 0 22 22" className="-ml-[2px]">
          <path d="M11 0V22M0 11H22" stroke="#9a9a9a" strokeWidth="2" />
        </svg>
      </div>
    </div>
  );
}

export default function App() {
  return (
    <div className="h-[1978px] w-[2808px] overflow-hidden bg-white pt-[75px] pl-[111px] font-['Inter','Noto_Sans_CJK_SC',sans-serif] [text-autospace:normal]">
      <div className="flex h-[1757px] w-[2586px] flex-col overflow-hidden rounded-[10px] border border-black bg-white shadow-[0_44px_72px_rgba(0,0,0,0.56),0_0_32px_rgba(0,0,0,0.1)]">
        <Toolbar />
        <Favorites />
        <TabBar />
        <div className="relative flex-1 overflow-hidden bg-[#fefefe]">
          <MindMap />
          <div className="mx-[16px] mt-[43px] h-[74px] bg-[#f3deb9]" />
          <AttackGraph />
          <h1 className="absolute inset-x-0 top-[1500px] text-center font-['Liberation_Serif',serif] text-[48px] leading-[68px] font-bold tracking-[0.1px] text-black">
            Bayesian Attack Graph Example
          </h1>
          <FileDialog />
        </div>
      </div>
    </div>
  );
}
